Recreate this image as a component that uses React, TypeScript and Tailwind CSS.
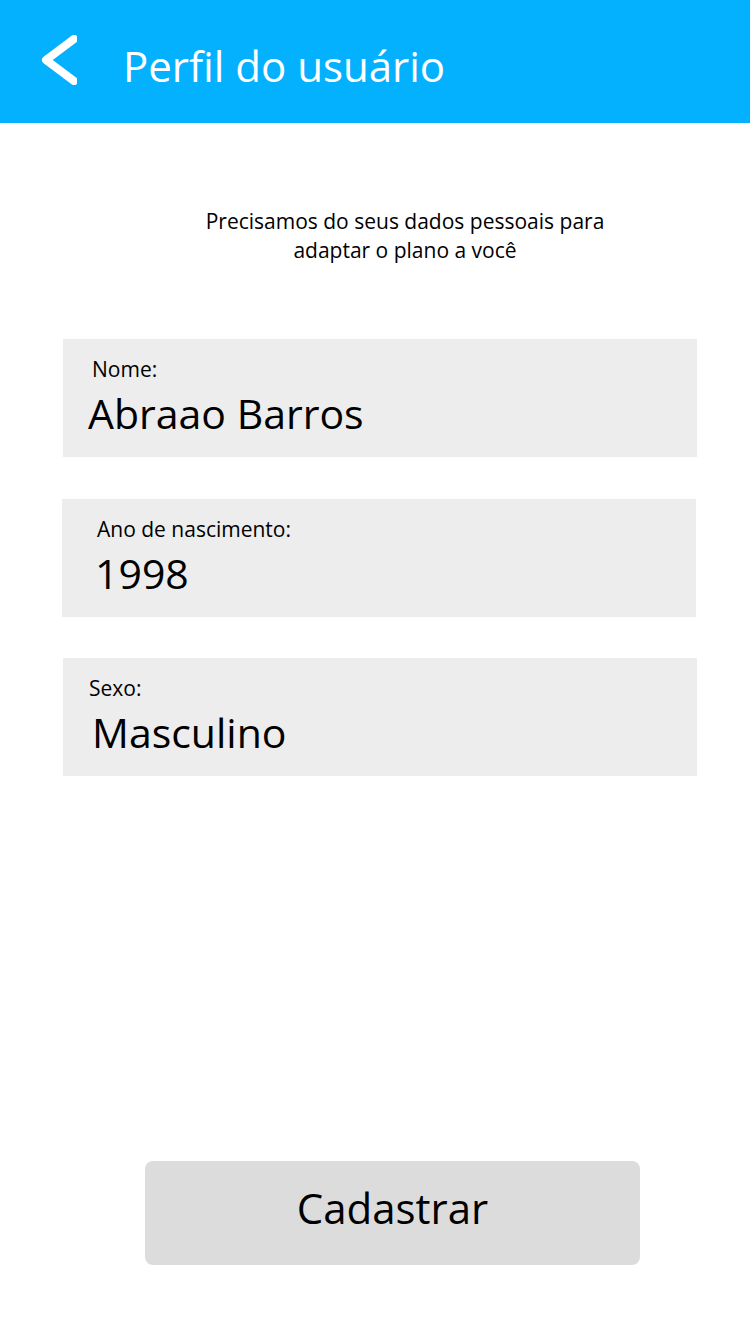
import React from 'react'

const fields = [
  { label: 'Nome:', value: 'Abraao Barros', box: 'ml-[63px] mt-[74px]', labelPad: 'pl-[29px]', valuePad: 'pl-[25px]' },
  { label: 'Ano de nascimento:', value: '1998', box: 'ml-[62px] mt-[42px]', labelPad: 'pl-[35px]', valuePad: 'pl-[33px]' },
  { label: 'Sexo:', value: 'Masculino', box: 'ml-[63px] mt-[41px]', labelPad: 'pl-[26px]', valuePad: 'pl-[29px]' },
]

export default function App() {
  return (
    <div className="flex h-[1334px] w-[750px] flex-col bg-white font-['Open_Sans',sans-serif] text-black">
      {/* Header */}
      <header className="flex h-[123px] items-center bg-[#03b1fe]">
        <svg width="36" height="50" viewBox="0 0 36 50" className="ml-[41px] mt-[-4px]" fill="none">
          <polyline points="33,4 5,25 33,46" stroke="white" strokeWidth="8" strokeLinecap="round" strokeLinejoin="round" />
        </svg>
        <h1 className="ml-[46px] mt-[8px] text-[42px] text-white">Perfil do usuário</h1>
      </header>

      {/* Intro */}
      <p className="mt-[84px] ml-[60px] text-center text-[21px] leading-[29px]">
        Precisamos do seus dados pessoais para
        <br />
        adaptar o plano a você
      </p>

      {/* Fields */}
      {fields.map((f) => (
        <div key={f.label} className={`${f.box} flex h-[118px] w-[634px] flex-col bg-[#ededed] pt-[16px]`}>
          <span className={`${f.labelPad} text-[21px] leading-[28px]`}>{f.label}</span>
          <span className={`${f.valuePad} mt-[4px] text-[41px] leading-[52px]`}>{f.value}</span>
        </div>
      ))}

      {/* Submit */}
      <div className="mt-auto mb-[69px] flex pl-[145px]">
        <button className="h-[104px] w-[495px] rounded-[8px] bg-[#dcdcdc] pb-[12px] text-[42px]">Cadastrar</button>
      </div>
    </div>
  )
}
